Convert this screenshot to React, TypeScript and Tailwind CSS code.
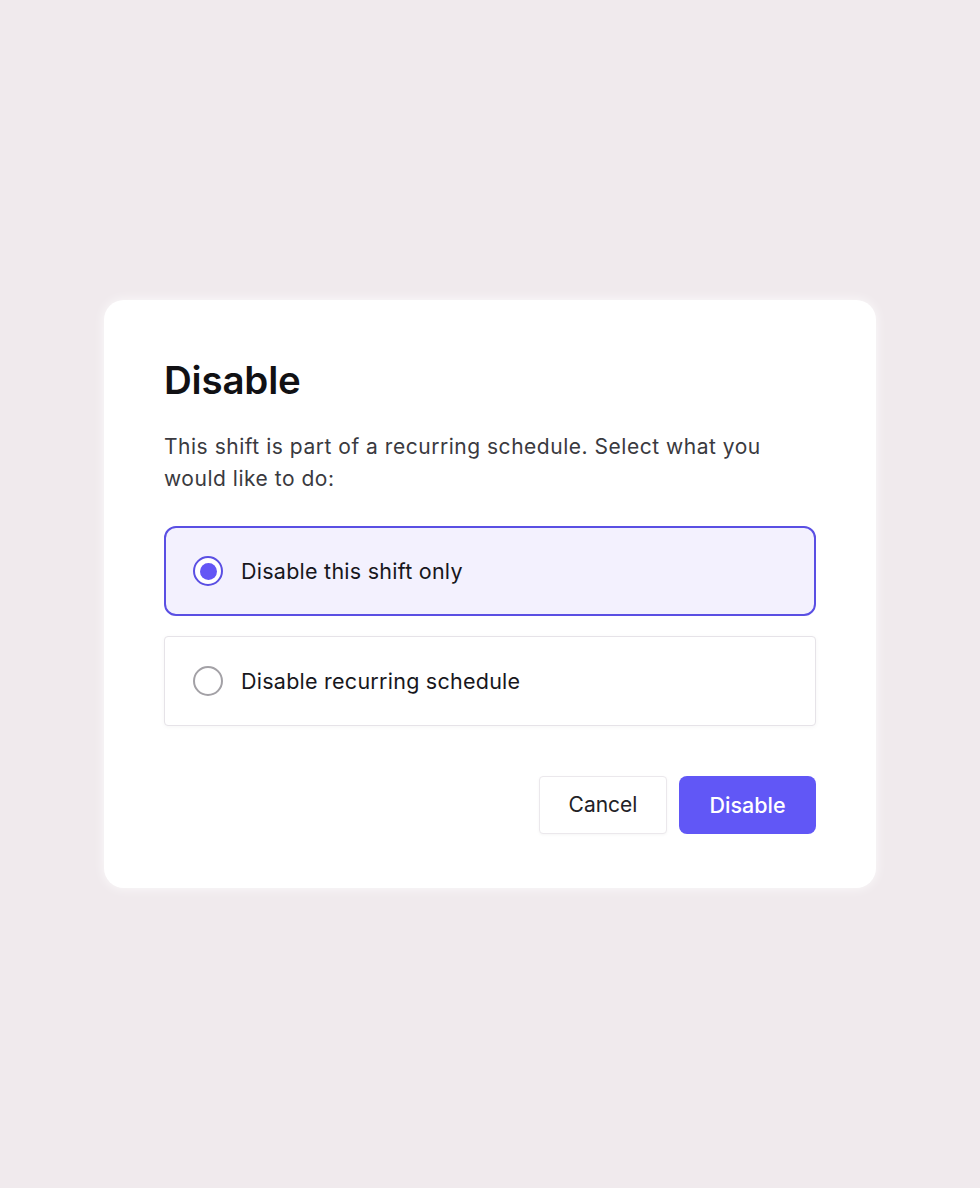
import React, { useState } from "react";

export default function App() {
  const [choice, setChoice] = useState<"one" | "all">("one");
  const opts: { id: "one" | "all"; label: string }[] = [
    { id: "one", label: "Disable this shift only" },
    { id: "all", label: "Disable recurring schedule" },
  ];
  return (
    <div
      className="w-[980px] h-[1188px] bg-[#f0eaed] flex items-start justify-center pt-[300px]"
      style={{ fontFamily: "Inter, 'Noto Sans', sans-serif" }}
    >
      <div className="w-[772px] bg-white rounded-[20px] shadow-[0_0_12px_rgba(255,255,255,0.8)] px-[60px] pt-[56px] pb-[54px]">
        <h1 className="text-[38.5px] leading-[48px] font-semibold text-[#111114] tracking-[-0.2px]">Disable</h1>
        <p className="mt-[27px] text-[21px] leading-[32px] text-[#3a3a40] tracking-[0.52px] pr-[40px]">
          This shift is part of a recurring schedule. Select what you would like to do:
        </p>
        <div className="mt-[31px] flex flex-col gap-[20px]">
          {opts.map((o) => {
            const sel = choice === o.id;
            return (
              <button
                key={o.id}
                onClick={() => setChoice(o.id)}
                className={
                  sel
                    ? "h-[90px] flex items-center gap-[18px] px-[27px] rounded-[12px] border-2 border-[#5a4fe3] bg-[#f3f1fe] text-left"
                    : "h-[90px] flex items-center gap-[18px] px-[28px] rounded-[4px] border border-[#e6e3e8] bg-white shadow-[0_1px_4px_rgba(0,0,0,0.04)] text-left"
                }
              >
                {sel ? (
                  <span className="w-[30px] h-[30px] rounded-full border-2 border-[#5a4fe3] flex items-center justify-center bg-white">
                    <span className="w-[17px] h-[17px] rounded-full bg-[#6356f5]" />
                  </span>
                ) : (
                  <span className="w-[30px] h-[30px] rounded-full border-2 border-[#a3a1a6] bg-white" />
                )}
                <span className="text-[21.5px] leading-[28px] text-[#17171c] tracking-[0.25px]">{o.label}</span>
              </button>
            );
          })}
        </div>
        <div className="mt-[50px] flex justify-end gap-[12px]">
          <button className="w-[128px] h-[58px] rounded-[4px] border border-[#ebe8ec] bg-white text-[21px] text-[#222226] shadow-[0_1px_3px_rgba(0,0,0,0.04)]">
            Cancel
          </button>
          <button className="w-[137px] h-[58px] rounded-[8px] bg-[#6157f6] text-[21.5px] font-medium text-white">
            Disable
          </button>
        </div>
      </div>
    </div>
  );
}
